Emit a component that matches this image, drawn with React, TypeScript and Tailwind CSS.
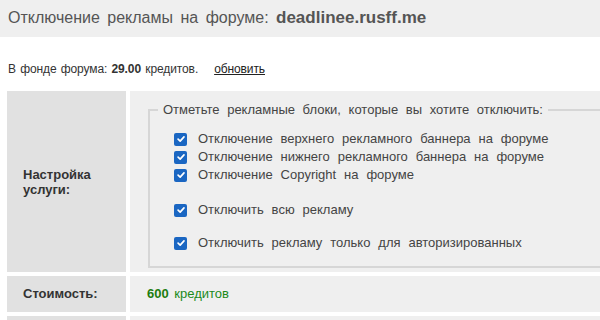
import React from "react";

const options = [
  { label: "Отключение верхнего рекламного баннера на форуме", mt: "" },
  { label: "Отключение нижнего рекламного баннера на форуме", mt: "" },
  { label: "Отключение Copyright на форуме", mt: "" },
  { label: "Отключить всю рекламу", mt: "mt-[17px]" },
  { label: "Отключить рекламу только для авторизированных", mt: "mt-[15px]" },
];

function Check() {
  return (
    <span className="flex h-[13px] w-[13px] shrink-0 items-center justify-center rounded-[2px] bg-[#1a66c2]">
      <svg viewBox="0 0 12 12" className="h-[10px] w-[10px]">
        <path d="M2.5 6.2 L5 8.6 L9.6 3.4" fill="none" stroke="#fff" strokeWidth="2" strokeLinecap="round" strokeLinejoin="round" />
      </svg>
    </span>
  );
}

export default function App() {
  return (
    <div className="w-[600px] h-[320px] overflow-hidden bg-white font-['Liberation_Sans',Arial,sans-serif] text-[#444]">
      <div className="h-[37px] bg-[#efefef] pl-2 pt-[8px] text-[16px] leading-[20px] text-[#555] [word-spacing:3px]">
        Отключение рекламы на форуме: <b className="text-[17px] text-[#555] [word-spacing:0]">deadlinee.rusff.me</b>
      </div>

      <div className="mt-[24px] pl-2 text-[12px] leading-[16px] tracking-[-0.1px] text-[#333] [word-spacing:1px]">
        В фонде форума: <b>29.00</b> кредитов.
        <a className="ml-[16px] text-[#222] underline">обновить</a>
      </div>

      <div className="mt-[14px] ml-[7px] grid w-[700px] grid-cols-[119px_1fr] gap-1">
        <div className="flex items-center bg-[#e1e1e1] pl-4 text-[13px] font-bold leading-[15px] text-[#333]">
          Настройка
          <br />
          услуги:
        </div>
        <div className="h-[181px] bg-[#efefef] pl-[18px] pt-[11px]">
          <fieldset className="h-[166px] border-2 border-[#d6d6d6] p-0">
            <legend className="ml-[8px] px-[5px] text-[13px] leading-[15px] text-[#444] [word-spacing:4px]">
              Отметьте рекламные блоки, которые вы хотите отключить:
            </legend>
            <div className="flex flex-col pl-[24px] pt-[13px]">
              {options.map((o) => (
                <label
                  key={o.label}
                  className={"flex h-[18px] items-center gap-[11px] text-[13px] text-[#444] [word-spacing:4.3px] " + o.mt}
                >
                  <Check />
                  {o.label}
                </label>
              ))}
            </div>
          </fieldset>
        </div>

        <div className="flex h-[36px] items-center bg-[#e1e1e1] pl-4 text-[13px] font-bold text-[#333]">
          Стоимость:
        </div>
        <div className="flex items-center bg-[#efefef] pl-[17px] text-[13px] text-[#1b8a1b] [word-spacing:2px]">
          <b className="text-[#1d7d0f]">600</b>&nbsp;кредитов
        </div>

        <div className="h-[36px] bg-[#e1e1e1]" />
        <div className="bg-[#efefef]" />
      </div>
    </div>
  );
}
